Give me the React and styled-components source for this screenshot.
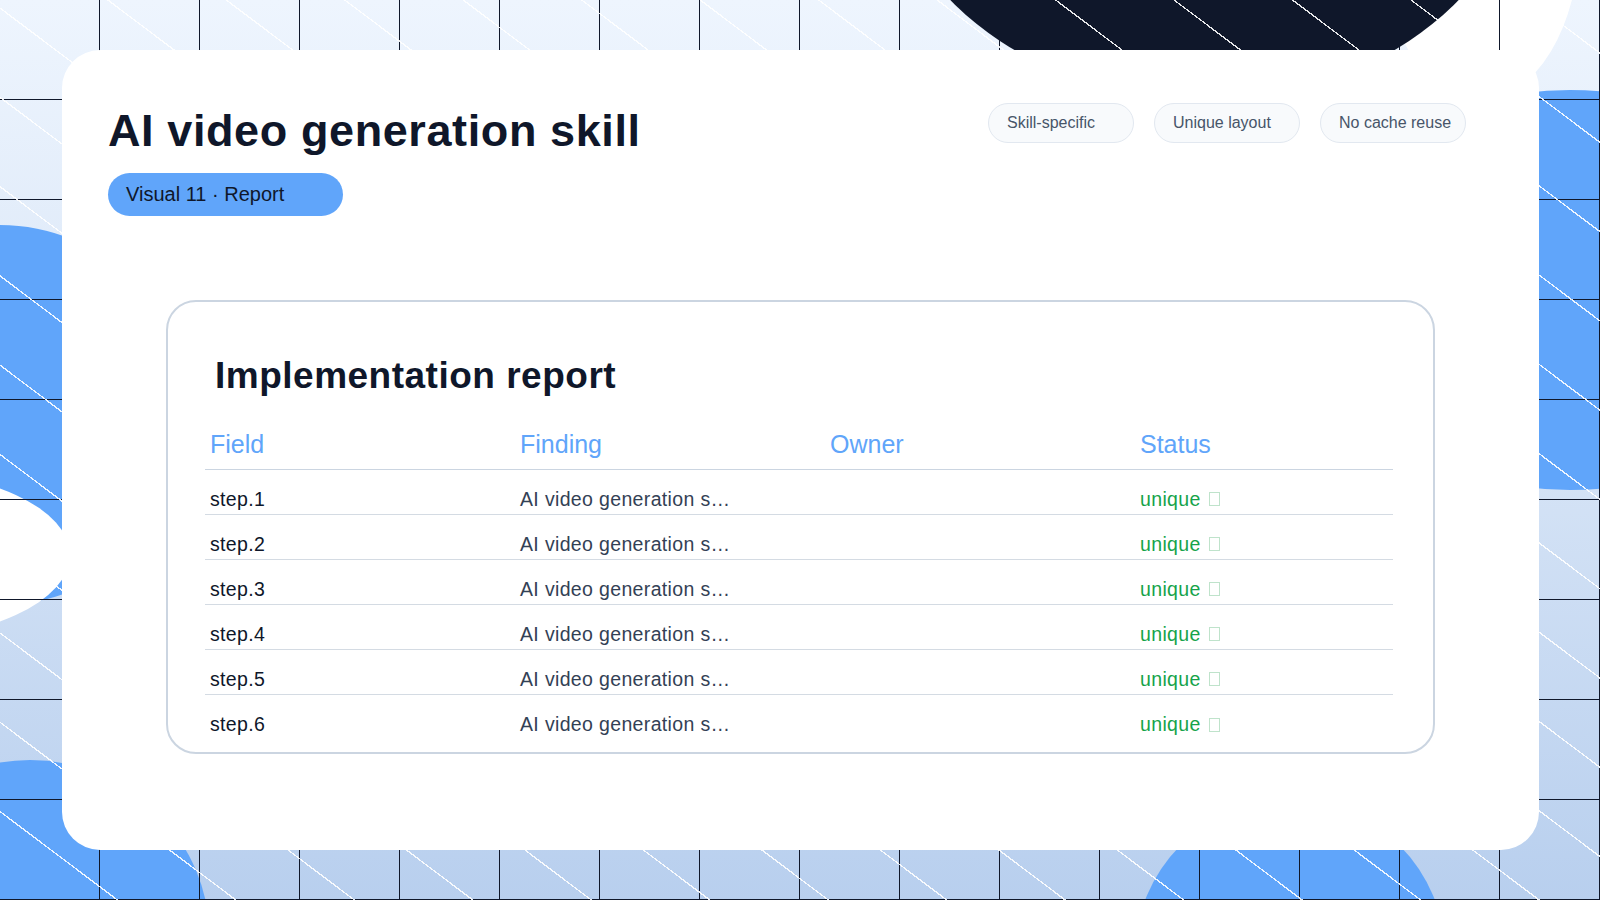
import React from "react";
import styled, { createGlobalStyle } from "styled-components";

const Global = createGlobalStyle`
  html, body { margin: 0; padding: 0; }
  body { font-family: "Liberation Sans", Arial, sans-serif; overflow: hidden; }
`;

const Stage = styled.div`
  position: relative;
  width: 1600px;
  height: 900px;
  overflow: hidden;
  background: linear-gradient(180deg, #eef5fe 0%, #d9e6f7 45%, #b8cfee 100%);
`;

const Blob = styled.div`
  position: absolute;
  border-radius: 50%;
  background: ${(p) => p.$c};
`;

const Grid = styled.div`
  position: absolute;
  inset: 0;
  background-image:
    linear-gradient(to right, #0f172a 1.5px, transparent 1.5px),
    linear-gradient(to bottom, #0f172a 1.5px, transparent 1.5px);
  background-size: 100px 100px;
  background-position: -1px -1px;
`;

const Stripes = styled.div`
  position: absolute;
  inset: 0;
  background-image: repeating-linear-gradient(
    37deg,
    transparent 0px,
    transparent 70px,
    rgba(255,255,255,0.9) 70px,
    rgba(255,255,255,0.9) 71.3px
  );
`;

const Card = styled.main`
  position: absolute;
  left: 62px;
  top: 50px;
  width: 1477px;
  height: 800px;
  box-sizing: border-box;
  background: #fff;
  border-radius: 38px;
  padding: 52px 73px 0 46px;
`;

const Header = styled.header`
  display: flex;
  justify-content: space-between;
  align-items: flex-start;
`;

const TitleBlock = styled.div`
  display: flex;
  flex-direction: column;
  gap: 13px;
`;

const Title = styled.h1`
  margin: 0;
  font-size: 45px;
  line-height: 58px;
  font-weight: 700;
  color: #0f172a;
  letter-spacing: 0.6px;
`;

const Pill = styled.div`
  width: 235px;
  height: 43px;
  box-sizing: border-box;
  border-radius: 22px;
  background: #60a5fa;
  color: #0f172a;
  font-size: 20px;
  display: flex;
  align-items: center;
  padding-left: 18px;
`;

const Chips = styled.div`
  display: flex;
  gap: 20px;
  margin-top: 1px;
`;

const Chip = styled.div`
  width: 146px;
  height: 40px;
  box-sizing: border-box;
  border: 1px solid #e2e8f0;
  background: #f8fafc;
  border-radius: 20px;
  color: #475569;
  font-size: 16px;
  display: flex;
  align-items: center;
  padding-left: 18px;
`;

const Panel = styled.section`
  margin: 84px 0 0 58px;
  width: 1269px;
  height: 454px;
  box-sizing: border-box;
  border: 2px solid #cbd5e1;
  border-radius: 30px;
  padding: 52px 40px 0 37px;
`;

const PanelTitle = styled.h2`
  margin: 0 0 22px 10px;
  font-size: 37px;
  line-height: 44px;
  font-weight: 700;
  color: #0f172a;
  letter-spacing: 0.5px;
`;

const Row = styled.div`
  display: grid;
  grid-template-columns: 310px 310px 310px 1fr;
  height: ${(p) => (p.$head ? "50px" : "45px")};
  align-items: center;
  padding-top: ${(p) => (p.$head ? "0" : "14px")};
  border-bottom: ${(p) => (p.$last ? "none" : `1px solid ${p.$head ? "#cbd5e1" : "#d4dbe3"}`)};
  box-sizing: border-box;
`;

const Cell = styled.div`
  padding-left: 5px;
  font-size: ${(p) => (p.$head ? "25px" : "19.5px")};
  letter-spacing: ${(p) => (p.$head ? "0" : "0.35px")};
  color: ${(p) => p.$c || "#0f172a"};
  white-space: nowrap;
  display: flex;
  align-items: center;
  gap: 8px;
`;

const Tofu = styled.span`
  width: 11px;
  height: 14px;
  border: 1px solid #bfe3cb;
  box-sizing: border-box;
`;

const rows = [1, 2, 3, 4, 5, 6];

export default function App() {
  return (
    <>
      <Global />
      <Stage>
        <Blob $c="#60a5fa" style={{ left: -190, top: 225, width: 380, height: 380 }} />
        <Blob $c="#ffffff" style={{ left: -300, top: 470, width: 370, height: 170 }} />
        <Blob $c="#60a5fa" style={{ left: -150, top: 760, width: 360, height: 360 }} />
        <Blob $c="#60a5fa" style={{ left: 1300, top: 90, width: 540, height: 400 }} />
        <Blob $c="#ffffff" style={{ left: 1380, top: -230, width: 200, height: 330 }} />
        <Blob $c="#60a5fa" style={{ left: 1135, top: 800, width: 310, height: 310 }} />
        <Blob $c="#0f172a" style={{ left: 882, top: -420, width: 645, height: 520 }} />
        <Grid />
        <Stripes />
        <Card>
          <Header>
            <TitleBlock>
              <Title>AI video generation skill</Title>
              <Pill>Visual 11 · Report</Pill>
            </TitleBlock>
            <Chips>
              <Chip>Skill-specific</Chip>
              <Chip>Unique layout</Chip>
              <Chip>No cache reuse</Chip>
            </Chips>
          </Header>
          <Panel>
            <PanelTitle>Implementation report</PanelTitle>
            <Row $head>
              <Cell $head $c="#60a5fa">Field</Cell>
              <Cell $head $c="#60a5fa">Finding</Cell>
              <Cell $head $c="#60a5fa">Owner</Cell>
              <Cell $head $c="#60a5fa">Status</Cell>
            </Row>
            {rows.map((n) => (
              <Row key={n} $last={n === 6}>
                <Cell>step.{n}</Cell>
                <Cell $c="#334155">AI video generation s…</Cell>
                <Cell />
                <Cell $c="#16a34a">unique <Tofu /></Cell>
              </Row>
            ))}
          </Panel>
        </Card>
      </Stage>
    </>
  );
}
